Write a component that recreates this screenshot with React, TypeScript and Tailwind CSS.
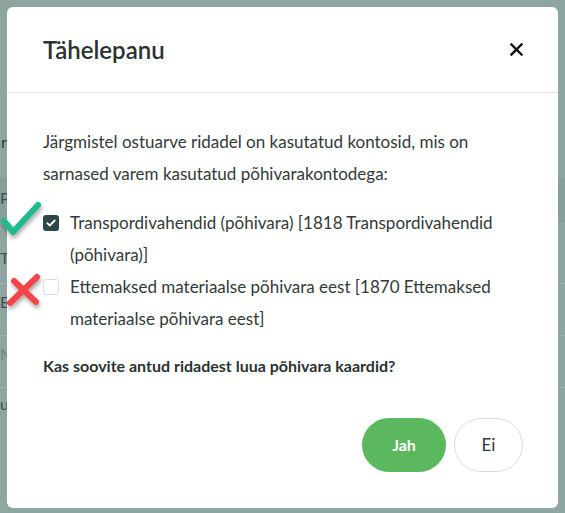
import React from "react";

export default function App() {
  return (
    <div
      className="relative h-[513px] w-[565px] overflow-hidden bg-[#8fa5a2]"
      style={{ fontFamily: "Lato, 'Liberation Sans', sans-serif" }}
    >
      {/* background page fragments (mostly covered by the dialog) */}
      <div className="absolute inset-0 text-[16px] text-[#3f4f4f]">
        <div className="absolute left-0 right-0 top-[178px] h-[45px] bg-[#889e9b]" />
        <div className="absolute left-0 right-0 top-[283px] h-px bg-[#9fb2af]" />
        <div className="absolute left-0 right-0 top-[335px] h-px bg-[#9fb2af]" />
        <div className="absolute left-0 right-0 top-[387px] h-px bg-[#9fb2af]" />
        <span className="absolute left-[1px] top-[130px] text-[#2f3d3d]">r</span>
        <span className="absolute left-[0px] top-[186px]">P</span>
        <span className="absolute left-[0px] top-[246px]">Transport</span>
        <span className="absolute left-[0px] top-[290px]">Ettemaks</span>
        <span className="absolute left-[0px] top-[342px] text-[#6f8583]">M</span>
        <span className="absolute left-[0px] top-[392px]">us</span>
      </div>

      {/* modal */}
      <div className="absolute left-[7px] top-[7px] flex h-[501px] w-[551px] flex-col rounded-[6px] bg-white text-[#333a3a]">
        <div className="flex h-[86px] items-center justify-between border-b border-[#e3e3e3] pl-[36px] pr-[35px]">
          <h1 className="text-[24px] font-semibold text-[#2b3232]">Tähelepanu</h1>
          <svg width="13" height="13" viewBox="0 0 13 13" className="mb-[1px]">
            <path d="M1.5 1.5 L11.5 11.5 M11.5 1.5 L1.5 11.5" stroke="#111" strokeWidth="2.4" strokeLinecap="square" />
          </svg>
        </div>
        <div className="flex flex-1 flex-col pl-[36px] pr-[35px] pt-[33px] text-[17px] leading-[32px]">
          <p>Järgmistel ostuarve ridadel on kasutatud kontosid, mis on sarnased varem kasutatud põhivarakontodega:</p>
          <div className="mt-[17px] flex flex-col">
            <div className="flex items-start gap-[11px]">
              <span className="mt-[8px] flex h-[16px] w-[16px] shrink-0 items-center justify-center rounded-[3px] bg-[#2b4747]">
                <svg width="10" height="8" viewBox="0 0 10 8">
                  <path d="M1.3 4.2 L3.8 6.5 L8.7 1.5" fill="none" stroke="#fff" strokeWidth="1.8" strokeLinecap="round" strokeLinejoin="round" />
                </svg>
              </span>
              <span>Transpordivahendid (põhivara) [1818 Transpordivahendid (põhivara)]</span>
            </div>
            <div className="flex items-start gap-[11px]">
              <span className="mt-[8px] h-[16px] w-[16px] shrink-0 rounded-[3px] border border-[#dcdcdc] bg-white" />
              <span>Ettemaksed materiaalse põhivara eest [1870 Ettemaksed materiaalse põhivara eest]</span>
            </div>
          </div>
          <p className="mt-[15px] text-[16px] font-bold text-[#2b3232]">Kas soovite antud ridadest luua põhivara kaardid?</p>
          <div className="mt-[36px] flex justify-end gap-[8px]">
            <button className="h-[54px] w-[84px] rounded-full bg-[#5cb85f] text-[16px] font-bold text-white">Jah</button>
            <button className="h-[54px] w-[69px] rounded-full border border-[#dcdcdc] bg-white text-[17px] text-[#333a3a]">Ei</button>
          </div>
        </div>
      </div>

      {/* annotation marks */}
      <svg className="absolute left-0 top-[196px]" width="48" height="52" viewBox="0 0 48 52">
        <defs>
          <filter id="sh" x="-30%" y="-30%" width="160%" height="160%">
            <feDropShadow dx="1" dy="3" stdDeviation="2" floodColor="#000" floodOpacity="0.35" />
          </filter>
        </defs>
        <path d="M4 25 L13 36 L38 9" fill="none" stroke="#20b98f" strokeWidth="6" strokeLinecap="round" strokeLinejoin="round" filter="url(#sh)" />
      </svg>
      <svg className="absolute left-0 top-[268px]" width="48" height="46" viewBox="0 0 48 46">
        <defs>
          <filter id="sh2" x="-30%" y="-30%" width="160%" height="160%">
            <feDropShadow dx="1" dy="3" stdDeviation="2" floodColor="#000" floodOpacity="0.35" />
          </filter>
        </defs>
        <g filter="url(#sh2)">
          <path d="M14 13 L36 34 M37 9 L10 35" fill="none" stroke="#f2454a" strokeWidth="6" strokeLinecap="round" />
        </g>
      </svg>
    </div>
  );
}
